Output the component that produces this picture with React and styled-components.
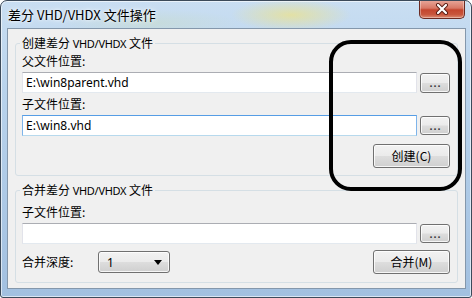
import React from "react";
import styled, { createGlobalStyle } from "styled-components";

const Global = createGlobalStyle`
  html, body { margin: 0; padding: 0; background: #ffffff; }
  body { font-family: "Noto Sans CJK SC", "Noto Sans", sans-serif; font-size: 12px; color: #000; }
  * { box-sizing: border-box; }
`;

const Window = styled.div`
  position: relative;
  width: 472px;
  height: 298px;
  border: 1px solid #3c4a5a;
  border-radius: 7px 7px 3px 3px;
  background:
    radial-gradient(ellipse 60px 16px at 290px 14px, rgba(236, 226, 140, 0.75), rgba(236, 226, 140, 0) 100%),
    radial-gradient(ellipse 90px 14px at 150px 22px, rgba(200, 220, 205, 0.6), rgba(200, 220, 205, 0) 100%),
    linear-gradient(180deg, #c9def2 0%, #b9d3ec 30%, #a2c0e0 100%);
  box-shadow: inset 0 0 0 1px rgba(255, 255, 255, 0.6);
  display: flex;
  flex-direction: column;
  padding: 0 5px 8px 6px;
  overflow: hidden;
`;

const TitleBar = styled.div`
  height: 27px;
  display: flex;
  align-items: flex-start;
  justify-content: space-between;
`;

const Title = styled.div`
  margin-top: 6px;
  margin-left: 1px;
  font-size: 13px;
  line-height: 16px;
  color: #000;
  text-shadow: 0 0 6px rgba(255, 255, 255, 0.9), 0 0 3px rgba(255, 255, 255, 0.9);
`;

const CloseButton = styled.div`
  width: 46px;
  height: 19px;
  margin-top: -1px;
  margin-right: 1px;
  border: 1px solid #6b2a22;
  border-top: none;
  border-radius: 0 0 5px 5px;
  background: linear-gradient(180deg, #e9a99c 0%, #d87866 45%, #c4452e 55%, #c8553c 80%, #dc8b72 100%);
  box-shadow: inset 0 0 0 1px rgba(255, 255, 255, 0.35);
  display: flex;
  align-items: center;
  justify-content: center;
`;

const Client = styled.div`
  flex: 1;
  border: 1px solid #8497ab;
  background: #f0f0f0;
  display: flex;
  flex-direction: column;
  padding: 14px 7px 0 7px;
`;

const GroupBox = styled.div`
  border: 1px solid #d5dfe5;
  border-radius: 3px;
  padding: 0 7px ${(p) => p.$pb}px 6px;
  margin-bottom: ${(p) => p.$mb}px;
  display: flex;
  flex-direction: column;
`;

const Legend = styled.div`
  align-self: flex-start;
  margin-top: -8px;
  margin-left: -2px;
  padding: 0 2px;
  background: #f0f0f0;
  line-height: 14px;
  height: 14px;
  font-size: 12px;
`;

const Latin = styled.span`
  font-family: "Noto Sans", "Liberation Sans", sans-serif;
  font-size: 11px;
  letter-spacing: -0.3px;
`;

const Label = styled.div`
  margin-top: ${(p) => p.$mt}px;
  line-height: 14px;
  height: 14px;
  font-size: 12px;
`;

const Row = styled.div`
  margin-top: ${(p) => p.$mt}px;
  display: flex;
  align-items: ${(p) => p.$align || "flex-start"};
  justify-content: ${(p) => p.$justify || "flex-start"};
`;

const TextBox = styled.div`
  flex: 1;
  height: 21px;
  background: #fff;
  border: 1px solid ${(p) => (p.$focus ? "#7eb4ea" : "#e2e3ea")};
  border-top-color: ${(p) => (p.$focus ? "#569de5" : "#abadb3")};
  border-bottom-color: ${(p) => (p.$focus ? "#b7d9ed" : "#e3e9ef")};
  padding: 0 3px;
  font-family: "Noto Sans", "Liberation Sans", sans-serif;
  font-size: 12px;
  line-height: 19px;
`;

const Button = styled.div`
  width: ${(p) => p.$w}px;
  height: ${(p) => p.$h}px;
  margin-left: ${(p) => p.$ml || 0}px;
  margin-top: ${(p) => p.$mtop || 0}px;
  border: 1px solid #707070;
  border-radius: 3px;
  background: linear-gradient(180deg, #f2f2f2 0%, #ebebeb 48%, #dddddd 52%, #cfcfcf 100%);
  box-shadow: inset 0 0 0 1px rgba(255, 255, 255, 0.8);
  display: flex;
  align-items: center;
  justify-content: center;
  font-size: 12px;
  color: #000;
  line-height: 14px;
`;

const Dots = styled.span`
  font-family: "Liberation Sans", sans-serif;
  font-size: 11px;
  font-weight: bold;
  color: #3a3a3a;
  letter-spacing: 1px;
  line-height: 10px;
  margin-left: 1px;
`;

const DepthLabel = styled.div`
  width: 76px;
  font-size: 12px;
  line-height: 14px;
`;

const Combo = styled.div`
  width: 72px;
  height: 22px;
  border: 1px solid #707070;
  border-radius: 3px;
  background: linear-gradient(180deg, #f2f2f2 0%, #ebebeb 48%, #dddddd 52%, #cfcfcf 100%);
  box-shadow: inset 0 0 0 1px rgba(255, 255, 255, 0.8);
  display: flex;
  align-items: center;
  justify-content: space-between;
  padding: 0 7px 0 8px;
  font-family: "Noto Sans", "Liberation Sans", sans-serif;
  font-size: 12px;
`;

const Spacer = styled.div`
  flex: 1;
`;

const Annotation = styled.div`
  position: absolute;
  left: 328px;
  top: 39px;
  width: 133px;
  height: 151px;
  border: 4px solid #000;
  border-radius: 22px;
  pointer-events: none;
`;

export default function App() {
  return (
    <>
      <Global />
      <Window>
        <TitleBar>
          <Title>差分 VHD/VHDX 文件操作</Title>
          <CloseButton>
            <svg width="14" height="12" viewBox="0 0 14 12">
              <path d="M3 2 L11 10 M11 2 L3 10" stroke="#5a1d14" strokeWidth="4" strokeLinecap="round" />
              <path d="M3 2 L11 10 M11 2 L3 10" stroke="#fff" strokeWidth="2.2" strokeLinecap="round" />
            </svg>
          </CloseButton>
        </TitleBar>
        <Client>
          <GroupBox $pb={7} $mb={14}>
            <Legend>创建差分 <Latin>VHD/VHDX</Latin> 文件</Legend>
            <Label $mt={4}>父文件位置:</Label>
            <Row $mt={4}>
              <TextBox>E:\win8parent.vhd</TextBox>
              <Button $w={30} $h={20} $ml={3} $mtop={1}><Dots>...</Dots></Button>
            </Row>
            <Label $mt={4}>子文件位置:</Label>
            <Row $mt={4}>
              <TextBox $focus>E:\win8.vhd</TextBox>
              <Button $w={30} $h={19} $ml={3} $mtop={1}><Dots>...</Dots></Button>
            </Row>
            <Row $mt={8} $justify="flex-end">
              <Button $w={77} $h={24}>创建(C)</Button>
            </Row>
          </GroupBox>
          <GroupBox $pb={8} $mb={5}>
            <Legend>合并差分 <Latin>VHD/VHDX</Latin> 文件</Legend>
            <Label $mt={8}>子文件位置:</Label>
            <Row $mt={4}>
              <TextBox></TextBox>
              <Button $w={30} $h={19} $ml={3} $mtop={1}><Dots>...</Dots></Button>
            </Row>
            <Row $mt={6} $align="center">
              <DepthLabel>合并深度:</DepthLabel>
              <Combo>
                <span>1</span>
                <svg width="8" height="5" viewBox="0 0 8 5">
                  <path d="M0 0 L8 0 L4 5 Z" fill="#000" />
                </svg>
              </Combo>
              <Spacer />
              <Button $w={77} $h={24}>合并(M)</Button>
            </Row>
          </GroupBox>
        </Client>
        <Annotation />
      </Window>
    </>
  );
}
